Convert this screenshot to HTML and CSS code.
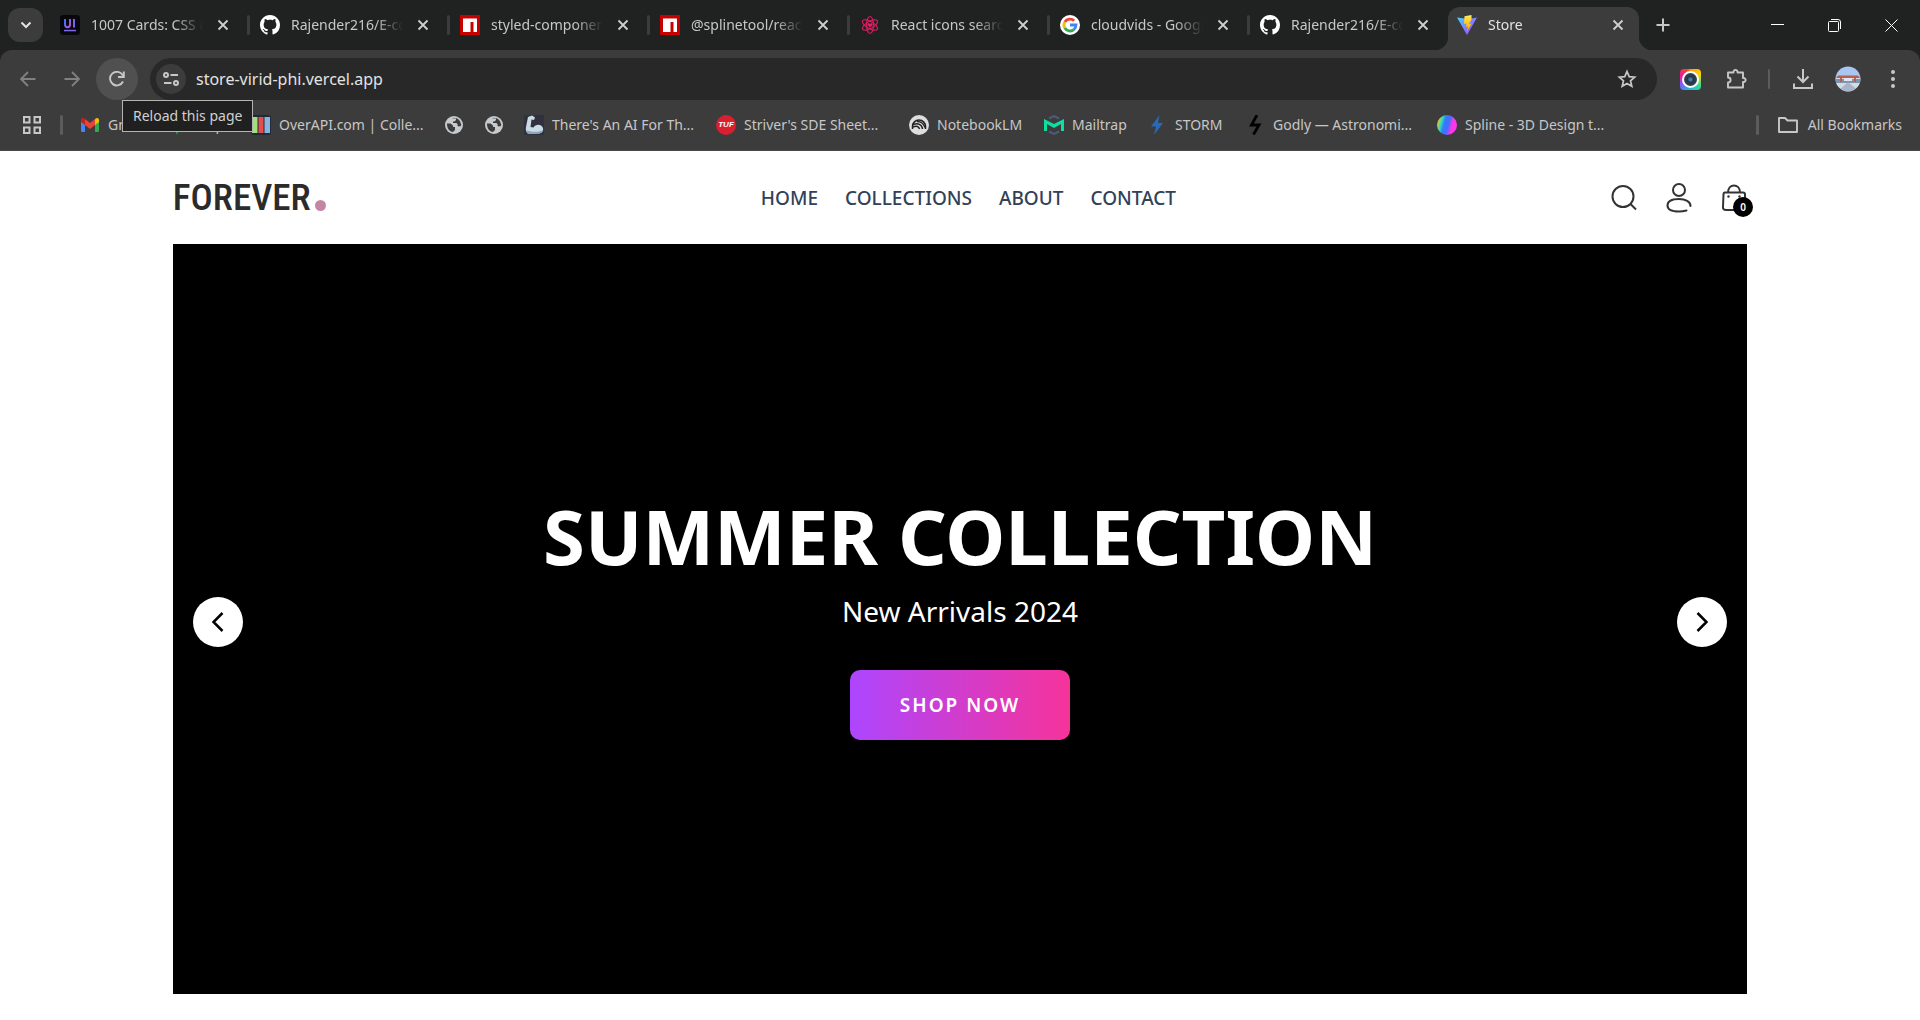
FILE: index.html
```html
<!DOCTYPE html>
<html lang="en">
<head>
<meta charset="utf-8">
<meta name="viewport" content="width=device-width, initial-scale=1">
<title>Store</title>
<link rel="stylesheet" href="styles.css">
</head>
<body>
<svg class="defs" aria-hidden="true">
  <defs>
    <linearGradient id="g-ui" x1="0" y1="0" x2="1" y2="1"><stop offset="0" stop-color="#3f6bff"/><stop offset="1" stop-color="#b35bd8"/></linearGradient>
    <linearGradient id="g-vite" x1="0" y1="0" x2="1" y2="1"><stop offset="0" stop-color="#41d1ff"/><stop offset="1" stop-color="#bd34fe"/></linearGradient>
    <linearGradient id="g-bolt" x1="0" y1="0" x2="0" y2="1"><stop offset="0" stop-color="#ffea83"/><stop offset=".2" stop-color="#ffdd35"/><stop offset="1" stop-color="#ffa800"/></linearGradient>
    <symbol id="close" viewBox="0 0 12 12"><path d="M1.5 1.5l9 9M10.5 1.5l-9 9" stroke="currentColor" stroke-width="1.8" fill="none"/></symbol>
    <symbol id="github" viewBox="0 0 16 16"><path fill="#fff" d="M8 0C3.58 0 0 3.58 0 8c0 3.54 2.29 6.53 5.47 7.59.4.07.55-.17.55-.38 0-.19-.01-.82-.01-1.49-2.01.37-2.53-.49-2.69-.94-.09-.23-.48-.94-.82-1.13-.28-.15-.68-.52-.01-.53.63-.01 1.08.58 1.23.82.72 1.21 1.87.87 2.33.66.07-.52.28-.87.51-1.07-1.78-.2-3.64-.89-3.64-3.95 0-.87.31-1.59.82-2.15-.08-.2-.36-1.02.08-2.12 0 0 .67-.21 2.2.82.64-.18 1.32-.27 2-.27s1.36.09 2 .27c1.53-1.04 2.2-.82 2.2-.82.44 1.1.16 1.92.08 2.12.51.56.82 1.27.82 2.15 0 3.07-1.87 3.75-3.65 3.95.29.25.54.73.54 1.48 0 1.07-.01 1.93-.01 2.2 0 .21.15.46.55.38A8.01 8.01 0 0 0 16 8c0-4.42-3.58-8-8-8z"/></symbol>
    <symbol id="npm" viewBox="0 0 20 20"><path fill="#c70000" d="M0 0h20v20H0z"/><path fill="#fff" d="M3 3.500h14V17h-3.500V7H10.500v10H3z"/></symbol>
    <symbol id="globe" viewBox="0 0 18 18"><circle cx="9" cy="9" r="9" fill="#c7cacd"/><path fill="#3c3c3c" d="M2 7.500h3.500l2.500 2v1.500h2v3l-2 2C4.500 15.500 1.800 12.500 2 7.500zM7 2.200l4-.2v2L9.500 5.500H8V7h3.500l1.500 2h3C16 6 14 3 11 2l.5 2.500 1.500 1-1 3.500 1.500 1.500L16 10l.2-2-2.200-2V4.200l-1.500-1.400-3.500-1z"/></symbol>
  </defs>
</svg>

<div class="browser">
  <div class="tabstrip">
    <button class="tab-search" aria-label="Search tabs"><svg width="12" height="8" viewBox="0 0 12 8"><path d="M1.500 1.500L6 6l4.500-4.500" fill="none" stroke="currentColor" stroke-width="2"/></svg></button>
    <div class="tabs">
      <div class="tab">
        <svg class="fav" viewBox="0 0 20 20"><rect width="20" height="20" rx="3" fill="#08080c"/><path d="M5 4v5.500c0 3.500 5 3.500 5 0V4" fill="none" stroke="url(#g-ui)" stroke-width="2"/><path d="M13 4h2v8.500h-2z" fill="#7a62f0"/><path d="M4 14.800h12v1.500H4z" fill="#7c68f0"/></svg>
        <span class="tab-title">1007 Cards: CSS &amp; Tailwind</span>
        <button class="tab-close" aria-label="Close tab"><svg><use href="#close"/></svg></button>
      </div>
      <div class="tab">
        <svg class="fav"><use href="#github"/></svg>
        <span class="tab-title">Rajender216/E-commerce</span>
        <button class="tab-close" aria-label="Close tab"><svg><use href="#close"/></svg></button>
      </div>
      <div class="tab">
        <svg class="fav"><use href="#npm"/></svg>
        <span class="tab-title">styled-components</span>
        <button class="tab-close" aria-label="Close tab"><svg><use href="#close"/></svg></button>
      </div>
      <div class="tab">
        <svg class="fav"><use href="#npm"/></svg>
        <span class="tab-title">@splinetool/react-spline</span>
        <button class="tab-close" aria-label="Close tab"><svg><use href="#close"/></svg></button>
      </div>
      <div class="tab">
        <svg class="fav" viewBox="0 0 20 20"><g fill="none" stroke="#d81b60" stroke-width="1.200"><ellipse cx="10" cy="10" rx="3.500" ry="8.500"/><ellipse cx="10" cy="10" rx="3.500" ry="8.500" transform="rotate(60 10 10)"/><ellipse cx="10" cy="10" rx="3.500" ry="8.500" transform="rotate(120 10 10)"/></g><path d="M10 12.500L7.500 10c-.5-2 2-2.500 2.500-1 .5-1.500 3-1 2.500 1z" fill="#e91e63"/></svg>
        <span class="tab-title">React icons search</span>
        <button class="tab-close" aria-label="Close tab"><svg><use href="#close"/></svg></button>
      </div>
      <div class="tab">
        <svg class="fav" viewBox="0 0 20 20"><circle cx="10" cy="10" r="10" fill="#fff"/><g fill="none" stroke-width="2.800"><path d="M14.200 5.800A6 6 0 0 0 4.800 7" stroke="#ea4335"/><path d="M4.800 7a6 6 0 0 0 0 6" stroke="#fbbc05"/><path d="M4.800 13a6 6 0 0 0 9 1.600" stroke="#34a853"/><path d="M13.800 14.600A6 6 0 0 0 16 10h-6" stroke="#4285f4"/></g></svg>
        <span class="tab-title">cloudvids - Google Search</span>
        <button class="tab-close" aria-label="Close tab"><svg><use href="#close"/></svg></button>
      </div>
      <div class="tab">
        <svg class="fav"><use href="#github"/></svg>
        <span class="tab-title">Rajender216/E-commerce</span>
        <button class="tab-close" aria-label="Close tab"><svg><use href="#close"/></svg></button>
      </div>
      <div class="tab active">
        <svg class="fav" viewBox="0 0 20 20"><path d="M0 2.500l10 17.500L20 2.500l-8 1.500z" fill="url(#g-vite)"/><path d="M14.500 0L7.500 1.200 7 9l2.500-.5L9 12l2-.6-1 5 4.500-8-2.700.6L14.500 4.500z" fill="url(#g-bolt)"/></svg>
        <span class="tab-title">Store</span>
        <button class="tab-close" aria-label="Close tab"><svg><use href="#close"/></svg></button>
      </div>
    </div>
    <button class="new-tab" aria-label="New tab"><svg width="14" height="14" viewBox="0 0 14 14"><path d="M7 .5v13M.5 7h13" stroke="currentColor" stroke-width="2"/></svg></button>
    <div class="window-controls">
      <button aria-label="Minimize"><svg width="13" height="13" viewBox="0 0 13 13"><path d="M0 5.500h13" stroke="#fff"/></svg></button>
      <button aria-label="Restore"><svg width="13" height="13" viewBox="0 0 13 13"><path d="M3 .5h7A2.500 2.500 0 0 1 12.500 3v7M.5 3.500a1 1 0 0 1 1-1h8a1 1 0 0 1 1 1v8a1 1 0 0 1-1 1h-8a1 1 0 0 1-1-1z" fill="none" stroke="#fff"/></svg></button>
      <button aria-label="Close"><svg width="13" height="13" viewBox="0 0 13 13"><path d="M.5.5l12 12M12.500.5l-12 12" stroke="#fff"/></svg></button>
    </div>
  </div>

  <div class="toolbar">
    <button class="nav-btn dim" aria-label="Back"><svg width="16" height="16" viewBox="0 0 16 16"><path d="M15.500 8H1.500M8 1L1 8l7 7" fill="none" stroke="currentColor" stroke-width="1.800"/></svg></button>
    <button class="nav-btn dim" aria-label="Forward"><svg width="16" height="16" viewBox="0 0 16 16"><path d="M.5 8h14M8 1l7 7-7 7" fill="none" stroke="currentColor" stroke-width="1.800"/></svg></button>
    <div class="reload-wrap">
      <button class="reload" aria-label="Reload" aria-describedby="tip"><svg width="16" height="16" viewBox="0 0 16 16"><path d="M14 10.500A6.800 6.800 0 1 1 13.600 4L14.500 5.500M14.800 .5V6H9" fill="none" stroke="currentColor" stroke-width="1.900"/></svg></button>
      <span class="tooltip" id="tip" role="tooltip">Reload this page</span>
    </div>
    <div class="omnibox">
      <button class="site-info" aria-label="Site information"><svg width="16" height="14" viewBox="0 0 16 14"><g fill="none" stroke="currentColor" stroke-width="2"><circle cx="3" cy="3" r="2"/><path d="M7.500 3H15M1 11h7.500"/><circle cx="13" cy="11" r="2"/></g></svg></button>
      <input class="url" type="text" aria-label="Address" value="store-virid-phi.vercel.app">
      <button class="star" aria-label="Bookmark this tab"><svg width="20" height="20" viewBox="0 0 20 20"><path d="M10 2.500l2.200 5.100 5.500.5-4.200 3.700 1.300 5.500L10 14.400l-4.800 2.900 1.300-5.500-4.200-3.700 5.500-.5z" fill="none" stroke="currentColor" stroke-width="1.700"/></svg></button>
    </div>
    <div class="actions">
      <button class="colour-ext" aria-label="Colour picker"><span></span></button>
      <button class="puzzle" aria-label="Extensions"><svg width="22" height="22" viewBox="0 0 22 22"><path d="M2 4.500h5.500C7 1 12 1 11.500 4.500H17V10c3.500-.5 3.500 4.500 0 4v5.500H2V14.500c3.500 0 3.500-5 0-5z" fill="none" stroke="currentColor" stroke-width="1.900" stroke-linejoin="round"/></svg></button>
      <i class="divider"></i>
      <button class="download" aria-label="Downloads"><svg width="22" height="22" viewBox="0 0 22 22"><path d="M11 1v13M5.500 8.500L11 14l5.500-5.500M2 15.500V20h18v-4.500" fill="none" stroke="currentColor" stroke-width="2"/></svg></button>
      <button class="avatar" aria-label="Profile"><svg width="26" height="26" viewBox="0 0 26 26"><clipPath id="av"><circle cx="13" cy="13" r="12.500"/></clipPath><g clip-path="url(#av)"><path fill="#a9c6f2" d="M0 0h26v12H0z"/><path fill="#d3dbe8" d="M0 12h26v14H0z"/><path fill="#7e94a8" d="M0 13h26v4H0z"/><path fill="#b9604c" d="M3 9.500h20l2 2.500H1zM5 12h2v4H5zM19 12h2v4h-2z"/><path fill="#dfe6f0" d="M9 12h8v3H9z"/><path fill="#aab4c8" d="M13 16l12 10H2z"/></g></svg></button>
      <button class="menu" aria-label="Menu"><svg width="6" height="20" viewBox="0 0 6 20"><g fill="currentColor"><circle cx="3" cy="3" r="2"/><circle cx="3" cy="10" r="2"/><circle cx="3" cy="17" r="2"/></g></svg></button>
    </div>
  </div>

  <div class="bookmarks">
    <button class="apps" aria-label="Apps"><svg width="18" height="18" viewBox="0 0 18 18"><path d="M1 1h5.500v5.500H1zM11.500 1H17v5.500h-5.500zM1 11.500h5.500V17H1zM11.500 11.500H17V17h-5.500z" fill="none" stroke="currentColor" stroke-width="2"/></svg></button>
    <i class="divider"></i>
    <nav class="bookmark-list" aria-label="Bookmarks">
      <a href="#"><svg class="fav" viewBox="0 0 20 20"><path fill="#4285f4" d="M1 5.500l4 3V17H2.200A1.200 1.200 0 0 1 1 15.800z"/><path fill="#34a853" d="M19 5.500l-4 3V17h2.800a1.200 1.200 0 0 0 1.200-1.200z"/><path fill="#fbbc04" d="M15 5v5l4-3V5c0-2-2-2.700-3.500-1.500z"/><path fill="#c5221f" d="M1 5v2l4 3V5l-.5-1.500C3 2.300 1 3 1 5z"/><path fill="#ea4335" d="M5 4l5 4 5-4v6l-5 4-5-4z"/></svg><span>Gmail</span></a>
      <a href="#"><svg class="fav" viewBox="0 0 20 20"><path fill="#34a853" d="M10 20C9 14 3 13 3 7a7 7 0 0 1 14 0c0 6-6 7-7 13z"/><circle cx="10" cy="7" r="3" fill="#fff"/></svg><span>Maps</span></a>
      <a href="#"><svg class="fav" viewBox="0 0 20 20"><rect y="0" width="20" height="20" rx="3" fill="#1f2a3a"/><path fill="#9be27a" d="M1 2h5.500v16H1z"/><path fill="#e84c4c" d="M7.500 2h5v16h-5z"/><path fill="#8bb4dc" d="M13.500 2H19v16h-5.500z"/></svg><span>OverAPI.com | Colle...</span></a>
      <a href="#" aria-label="Site"><svg class="fav inset"><use href="#globe"/></svg></a>
      <a href="#" aria-label="Site"><svg class="fav inset"><use href="#globe"/></svg></a>
      <a href="#"><svg class="fav" viewBox="0 0 20 20"><path fill="#30303f" d="M0 0h20v20H0z"/><path fill="#c9dbe6" d="M4 2l4-1.500 3 2-1 2.500-2.500-.5L6.500 12l3 .5c2-3.500 7-3.500 9-.5 2 4-1 6.500-4.500 6.500L5 19c-3-1-3.500-4-3-7z"/><path fill="#8ea4b4" d="M5 16c5 1.500 10 1 14-1-1 3-3 3.500-6 3.700L5 19c-2-.5-2.500-2-2.500-3.500z"/></svg><span>There's An AI For Th...</span></a>
      <a href="#"><span class="fav tuf" aria-hidden="true">TUF</span><span>Striver's SDE Sheet...</span></a>
      <a href="#"><svg class="fav" viewBox="0 0 20 20"><circle cx="10" cy="10" r="10" fill="#dedede"/><g fill="none" stroke="#222" stroke-width="1.500"><path d="M3.500 14v-2.500a6.500 6.500 0 0 1 13 0V14"/><path d="M4 9.500c5-2 9 0 9.500 4.500"/><path d="M4 12c3.500-1.500 6-.5 6.500 2M8 6.500c5 0 7 3 8 6"/></g></svg><span>NotebookLM</span></a>
      <a href="#"><svg class="fav" viewBox="0 0 20 20"><path d="M5 3.500L10 1l5 2.500M5 16.500l5 2.500 5-2.500" fill="none" stroke="#4c5a7c" stroke-width="2"/><path fill="#0be0a0" d="M0 4l10 5 10-5v12h-3V9l-7 4-7-4v7H0z"/></svg><span>Mailtrap</span></a>
      <a href="#"><svg class="fav" viewBox="0 0 20 20"><path fill="#2869b8" d="M12.500 0L4 11.500h5L7 20l9-12h-5z"/></svg><span>STORM</span></a>
      <a href="#"><svg class="fav" viewBox="0 0 20 20"><path d="M12 0L6.500 10h7.500L8.500 19.500" fill="none" stroke="#000" stroke-width="2.800"/></svg><span>Godly — Astronomi...</span></a>
      <a href="#"><span class="fav spline" aria-hidden="true"></span><span>Spline - 3D Design t...</span></a>
    </nav>
    <i class="divider"></i>
    <button class="all-bookmarks"><svg width="22" height="18" viewBox="0 0 22 18"><path d="M2 2h6l2.500 2.500H20V16H2z" fill="none" stroke="currentColor" stroke-width="1.900" stroke-linejoin="round"/></svg>All Bookmarks</button>
  </div>
</div>

<div class="store">
  <header class="store-header">
    <a class="logo" href="#">FOREVER<i></i></a>
    <nav class="store-nav" aria-label="Main">
      <a href="#">HOME</a>
      <a href="#">COLLECTIONS</a>
      <a href="#">ABOUT</a>
      <a href="#">CONTACT</a>
    </nav>
    <div class="store-tools">
      <button aria-label="Search"><svg width="26" height="30" viewBox="0 0 26 30"><g fill="none" stroke="#333" stroke-width="2"><circle cx="12" cy="13.500" r="10.500"/><path d="M19.500 21l5.500 5.500"/></g></svg></button>
      <button aria-label="Account"><svg width="26" height="30" viewBox="0 0 26 30"><g fill="none" stroke="#333" stroke-width="2" stroke-linecap="round"><circle cx="13" cy="7" r="6"/><path d="M24.500 23C24.500 18.500 19.500 16 13 16S1.500 18 1.500 22.500s5 6 11.500 6c3 0 5-.3 7.500-1"/></g></svg></button>
      <button class="cart" aria-label="Cart"><svg width="26" height="30" viewBox="0 0 26 30"><g fill="none" stroke="#333" stroke-width="2"><path d="M4 9.500h18c1.300 0 2 .7 2 2V24c0 2-1 3-3 3H5c-2 0-3.200-1-3-3l.5-12.500c0-1.300.5-2 1.500-2zM7 9.500c0-9.500 12-9.500 12 0"/></g><circle cx="7.500" cy="13.500" r="1.200" fill="#333"/><circle cx="18.500" cy="13.500" r="1.200" fill="#333"/></svg><span class="badge">0</span></button>
    </div>
  </header>
  <main class="hero">
    <button class="arrow" aria-label="Previous"><svg width="12" height="20" viewBox="0 0 12 20"><path d="M10.500 1L1.500 10l9 9" fill="none" stroke="#000" stroke-width="2.500"/></svg></button>
    <div class="hero-copy">
      <h1>SUMMER COLLECTION</h1>
      <p>New Arrivals 2024</p>
      <button class="shop">SHOP NOW</button>
    </div>
    <button class="arrow" aria-label="Next"><svg width="12" height="20" viewBox="0 0 12 20"><path d="M1.500 1l9 9-9 9" fill="none" stroke="#000" stroke-width="2.500"/></svg></button>
  </main>
</div>
</body>
</html>
```
FILE: styles.css
```css
* {
  box-sizing: border-box;
}

body {
  margin: 0;
  background: #fff;
  font-family: "Noto Sans", "Open Sans", sans-serif;
  overflow-x: hidden;
}

button {
  display: flex;
  align-items: center;
  justify-content: center;
  flex: none;
  margin: 0;
  padding: 0;
  border: 0;
  background: none;
  color: inherit;
  font: inherit;
}

a {
  color: inherit;
  text-decoration: none;
}

svg {
  display: block;
  flex: none;
}

.defs {
  position: absolute;
  width: 0;
  height: 0;
}

/* Browser frame */
.browser {
  background: #202221;
  color: #c7c7c7;
  font-size: 14px;
  line-height: 20px;
}

.fav {
  flex: none;
  width: 20px;
  height: 20px;
}

.fav.inset {
  padding: 1px;
}

.divider {
  flex: none;
  width: 3px;
  height: 20px;
  border-radius: 2px;
  background: #5c5c5c;
}

.tabstrip {
  display: flex;
  align-items: center;
  height: 50px;
  padding-left: 8px;
}

.tab-search {
  width: 35px;
  height: 34px;
  margin-right: 7px;
  border-radius: 12px;
  background: #3c3c3c;
  color: #e3e3e3;
}

.tabs {
  display: flex;
  align-self: stretch;
  flex: 0 1 1589px;
  min-width: 0;
}

.tab {
  display: flex;
  align-items: center;
  flex: 0 1 200px;
  min-width: 0;
  padding-left: 10px;
}

.tab:not(.active)::after {
  content: "";
  width: 3px;
  height: 20px;
  margin-left: 12px;
  border-radius: 2px;
  background: #3c3c3c;
}

.tab:nth-child(7)::after {
  visibility: hidden;
}

.tab-title {
  flex: 1;
  min-width: 0;
  margin-left: 11px;
  overflow: hidden;
  white-space: nowrap;
  mask-image: linear-gradient(to right, #000 84px, transparent 112px);
}

.tab-close {
  width: 24px;
  height: 24px;
  margin-left: 8px;
  color: #d0d0d0;
}

.tab-close svg {
  width: 12px;
  height: 12px;
}

.tab.active {
  position: relative;
  flex-basis: 191px;
  margin: 7px 0 0 -2px;
  padding: 0 9px 7px 9px;
  border-radius: 12px 12px 0 0;
  background: #3c3c3c;
  color: #e3e3e3;
}

.tab.active::before,
.tab.active::after {
  content: "";
  position: absolute;
  bottom: 0;
  width: 14px;
  height: 14px;
}

.tab.active::before {
  right: 100%;
  background: radial-gradient(circle at 0 0, transparent 14px, #3c3c3c 15px);
}

.tab.active::after {
  left: 100%;
  margin: 0;
  border-radius: 0;
  background: radial-gradient(circle at 100% 0, transparent 14px, #3c3c3c 15px);
}

.new-tab {
  width: 34px;
  height: 34px;
  margin-left: 7px;
}

.window-controls {
  display: flex;
  margin-left: auto;
}

.window-controls button {
  width: 57px;
  height: 50px;
}

.toolbar {
  display: flex;
  align-items: center;
  height: 58px;
  padding: 0 16px 0 7px;
  border-radius: 12px 12px 0 0;
  background: #3c3c3c;
}

.nav-btn {
  width: 42px;
  height: 42px;
  margin-right: 2px;
}

.dim {
  color: #818181;
}

.reload-wrap {
  position: relative;
  margin: 0 12px 0 1px;
}

.reload {
  width: 42px;
  height: 42px;
  border-radius: 50%;
  background: #505050;
}

.tooltip {
  position: absolute;
  z-index: 2;
  top: 42px;
  left: 26px;
  padding: 5px 10px;
  border: 1px solid #b4b4b4;
  background: #202020;
  color: #d0d0d0;
  white-space: nowrap;
}

.omnibox {
  display: flex;
  align-items: center;
  flex: 1;
  min-width: 0;
  height: 42px;
  padding: 0 20px 0 6px;
  border-radius: 21px;
  background: #282828;
}

.site-info {
  width: 30px;
  height: 30px;
  border-radius: 50%;
  background: #3c3c3c;
}

.url {
  flex: 1;
  min-width: 0;
  margin: 0 10px;
  padding: 0;
  border: 0;
  outline: 0;
  background: none;
  color: #e3e3e3;
  font: 16px/24px "Noto Sans", "Open Sans", sans-serif;
}

.actions {
  display: flex;
  align-items: center;
}

.actions .divider {
  width: 2px;
}

.colour-ext {
  width: 21px;
  height: 21px;
  margin: 0 25px 0 23px;
  border-radius: 4px;
  background: conic-gradient(#ff9800, #ffd600 60deg, #2bd9a0 130deg, #29a9e8 200deg, #7c5cff 240deg, #f0189a 290deg, #f44336 340deg, #ff9800);
}

.colour-ext span {
  width: 17px;
  height: 17px;
  border: 2px solid #fff;
  border-radius: 50%;
  background: radial-gradient(circle, #3b82b0 1px, #263442 3px, #34424e 6px);
}

.puzzle {
  margin-right: 20px;
}

.download {
  margin: 0 21px 0 22px;
}

.menu {
  margin-left: 29px;
  margin-right: 8px;
}

.bookmarks {
  display: flex;
  align-items: center;
  height: 43px;
  padding: 0 18px 9px 23px;
  border-bottom: 1px solid #4a4a4a;
  background: #3c3c3c;
}

.apps {
  margin-right: 19px;
}

.bookmark-list {
  display: grid;
  grid-template-columns: 87px 84px 193px 40px 40px 192px 193px 135px 103px 98px 192px 192px;
  flex: 1;
  min-width: 0;
  margin-left: 17px;
  overflow: hidden;
}

.bookmark-list a {
  display: flex;
  align-items: center;
  gap: 8px;
  white-space: nowrap;
}

.tuf {
  border-radius: 50%;
  background: #d81f30;
  color: #fff;
  font: italic bold 8px/20px "Liberation Sans", sans-serif;
  text-align: center;
}

.spline {
  border-radius: 50%;
  background: linear-gradient(105deg, #ffb52e 10%, #37e0b0 24%, #2f7cff 38%, #4a6cff 55%, #ff36e8 72%);
}

.all-bookmarks {
  gap: 9px;
  margin-left: 18px;
}

/* Storefront */
.store {
  padding: 0 9vw;
}

.store-header {
  display: flex;
  align-items: center;
  justify-content: space-between;
  height: 93px;
}

.logo {
  display: flex;
  align-items: flex-end;
  gap: 4px;
  color: #2b2b2b;
  font: 500 37px/42px "Roboto Condensed", "Liberation Sans Narrow", "Liberation Sans", sans-serif;
}

.logo i {
  width: 11px;
  height: 11px;
  margin-bottom: 8px;
  border-radius: 50%;
  background: #c586a5;
}

.store-nav {
  display: flex;
  gap: 27px;
  padding-top: 2px;
  color: #314158;
  font-size: 19px;
  font-weight: 500;
  line-height: 25px;
}

.store-tools {
  display: flex;
  gap: 29px;
}

.cart {
  position: relative;
}

.badge {
  position: absolute;
  right: -6px;
  bottom: -4px;
  width: 20px;
  height: 20px;
  border-radius: 50%;
  background: #000;
  color: #fff;
  font-size: 10px;
  font-weight: 600;
  line-height: 20px;
  text-align: center;
}

.hero {
  display: flex;
  align-items: center;
  justify-content: space-between;
  min-height: 750px;
  padding: 0 20px;
  margin-bottom: 26px;
  background: #000;
  color: #fff;
}

.arrow {
  width: 50px;
  height: 50px;
  margin-top: 6px;
  border-radius: 50%;
  background: #fff;
}

.hero-copy {
  display: flex;
  flex-direction: column;
  align-items: center;
  text-align: center;
}

.hero-copy h1 {
  margin: 0 0 20px;
  font-size: 76px;
  font-weight: 700;
  line-height: 75px;
}

.hero-copy p {
  margin: 0 0 41px;
  font-size: 28px;
  line-height: 36px;
}

.shop {
  padding: 22px 50px;
  border-radius: 10px;
  background: linear-gradient(to right, #ad46ff, #f6339a);
  font-size: 19px;
  font-weight: 600;
  line-height: 26px;
  letter-spacing: 2px;
}
```
